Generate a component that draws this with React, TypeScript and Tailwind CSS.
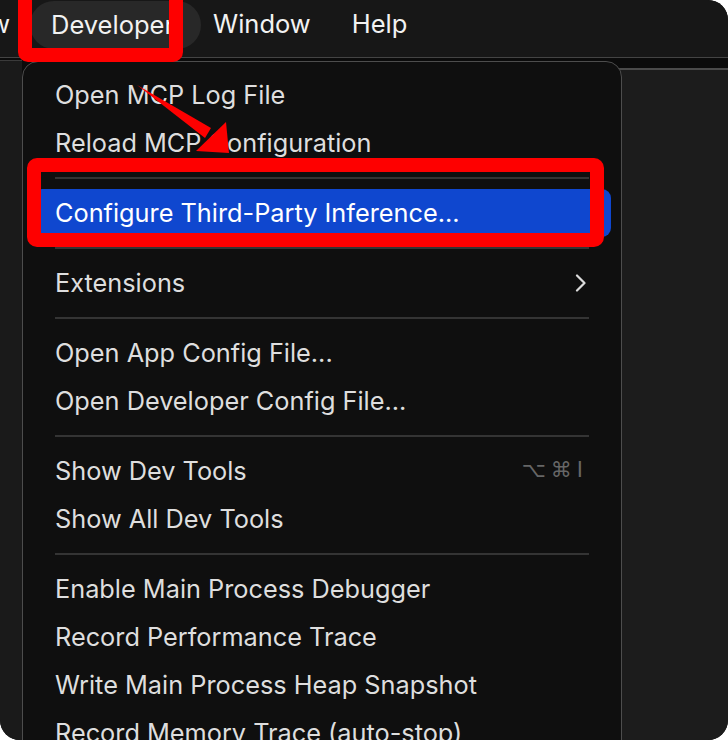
import * as React from "react";

type Entry =
  | { kind: "item"; label: string; active?: boolean; submenu?: boolean; shortcut?: string[] }
  | { kind: "sep" };

const entries: Entry[] = [
  { kind: "item", label: "Open MCP Log File" },
  { kind: "item", label: "Reload MCP Configuration" },
  { kind: "sep" },
  { kind: "item", label: "Configure Third-Party Inference...", active: true },
  { kind: "sep" },
  { kind: "item", label: "Extensions", submenu: true },
  { kind: "sep" },
  { kind: "item", label: "Open App Config File..." },
  { kind: "item", label: "Open Developer Config File..." },
  { kind: "sep" },
  { kind: "item", label: "Show Dev Tools", shortcut: ["⌥", "⌘", "I"] },
  { kind: "item", label: "Show All Dev Tools" },
  { kind: "sep" },
  { kind: "item", label: "Enable Main Process Debugger" },
  { kind: "item", label: "Record Performance Trace" },
  { kind: "item", label: "Write Main Process Heap Snapshot" },
  { kind: "item", label: "Record Memory Trace (auto-stop)" },
];

const Chevron = () => (
  <svg width="12" height="18" viewBox="0 0 12 18" fill="none">
    <path d="M2 1.5 L9.5 9 L2 16.5" stroke="#dcdcdc" strokeWidth="2.2" strokeLinecap="round" strokeLinejoin="round" />
  </svg>
);

const MenuRow: React.FC<{ entry: Entry }> = ({ entry }) => {
  if (entry.kind === "sep") {
    return (
      <div className="h-[22px] flex items-center mx-[22px]">
        <div className="h-[2px] w-full bg-[#343434]" />
      </div>
    );
  }
  return (
    <div
      className={`h-[48px] flex items-center justify-between pl-[22px] rounded-[9px] ${
        entry.shortcut ? "pr-[28px]" : "pr-[24px]"
      } ${entry.active ? "bg-[#0f47cf] text-white" : "text-[#dedede]"}`}
    >
      <span className="whitespace-nowrap">{entry.label}</span>
      {entry.submenu && <Chevron />}
      {entry.shortcut && (
        <span className="flex items-center gap-[5px] text-[21px] text-[#666666] font-['DejaVu_Sans',sans-serif]">
          {entry.shortcut.map((k) => (
            <span key={k}>{k}</span>
          ))}
        </span>
      )}
    </div>
  );
};

export default function App() {
  return (
    <div className="w-[728px] h-[740px] bg-white overflow-hidden font-['Inter',sans-serif]">
      <div className="relative w-full h-full rounded-[20px] rounded-tl-none overflow-hidden bg-[#0b0b0b] flex flex-col">
        {/* menubar */}
        <div className="h-[58px] shrink-0 bg-[#171717] border-b-[1px] border-[#444444] flex items-start text-[25.5px] text-[#f2f2f2]">
          <div className="w-[10px] overflow-hidden flex justify-end mt-[5px]">
            <span className="whitespace-nowrap">View</span>
          </div>
          <div className="ml-[20px] mt-[1px] h-[48px] flex items-center pl-[21px] pr-[27px] rounded-full bg-[#282828]">
            Developer
          </div>
          <span className="ml-[12px] mt-[5px]">Window</span>
          <span className="ml-[41px] mt-[5px]">Help</span>
        </div>

        {/* window body */}
        <div className="flex-1 flex">
          <div className="w-[22px] mt-[2px] border-t-[1px] border-[#3a3a3a] bg-[#1a1a1a]" />
          <div className="w-[380px]" />
          <div className="flex-1 mt-[10px] border-t-[2px] border-[#4a4a4a] bg-[#1c1c1c]" />
        </div>

        {/* dropdown menu */}
        <div className="absolute left-[22px] top-[61px] w-[600px] h-[720px] rounded-[16px] border-[1px] border-[#4d4d4d] bg-[#0f0f0f] pt-[9px] px-[10px] text-[25.3px]">
          {entries.map((e, i) => (
            <MenuRow key={i} entry={e} />
          ))}
        </div>

        {/* annotations */}
        <div className="absolute left-[18px] top-[-14px] w-[165px] h-[76px] border-[14px] border-[#fe0000] rounded-[10px]" />
        <div className="absolute left-[27px] top-[158px] w-[577px] h-[89px] border-[14px] border-[#fe0000] rounded-[10px]" />
        <svg className="absolute left-0 top-0" width="728" height="740" viewBox="0 0 728 740">
          <polygon points="137,85 211,128 205,138" fill="#fe0000" />
          <polygon points="196,151 226,122 229,153" fill="#fe0000" />
        </svg>
      </div>
    </div>
  );
}
